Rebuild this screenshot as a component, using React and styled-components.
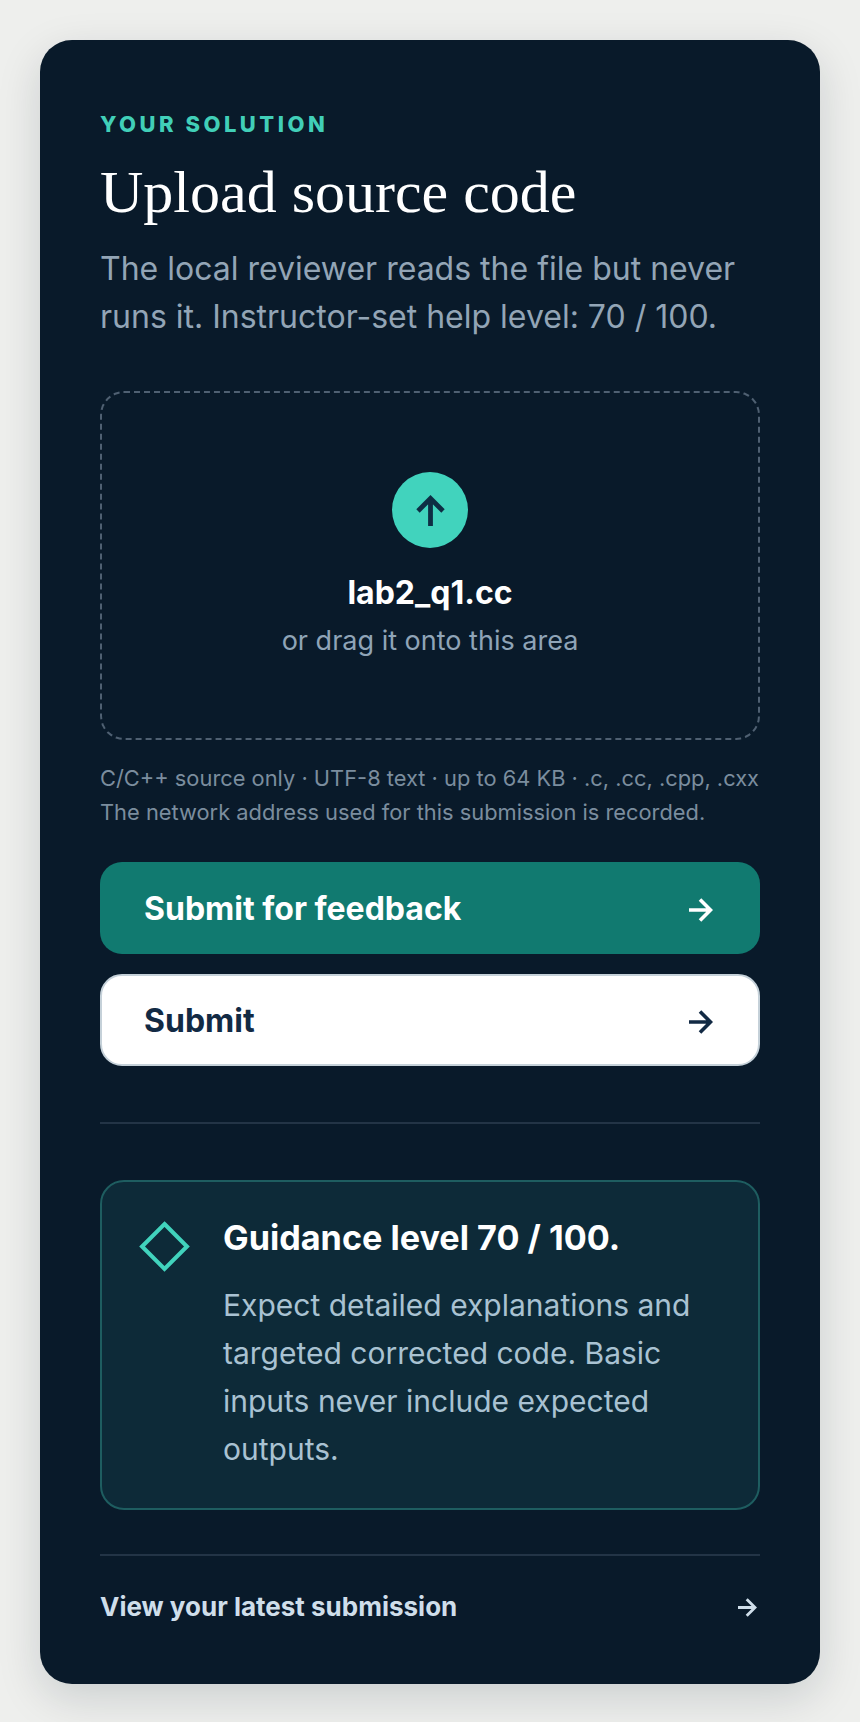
import React from 'react';
import styled, { createGlobalStyle } from 'styled-components';

const GlobalStyle = createGlobalStyle`
  html, body {
    margin: 0;
    padding: 0;
    background: #eeefed;
  }
  * {
    box-sizing: border-box;
  }
`;

const Page = styled.main`
  width: 860px;
  height: 1722px;
  padding: 40px;
  font-family: Inter, "Liberation Sans", sans-serif;
`;

const Card = styled.section`
  height: 1644px;
  padding: 72px 60px 0;
  background: #091a2a;
  border-radius: 32px;
  box-shadow: 0 14px 44px rgba(10, 26, 41, 0.15);
`;

const Eyebrow = styled.div`
  font-size: 22px;
  line-height: 24px;
  font-weight: 800;
  letter-spacing: 3.5px;
  color: #41cfb8;
`;

const Title = styled.h1`
  margin: 23px 0 0;
  font-family: "Liberation Serif", serif;
  font-size: 60px;
  line-height: 66px;
  font-weight: 400;
  color: #ffffff;
`;

const Lead = styled.p`
  margin: 20px 0 0;
  font-size: 32px;
  line-height: 48px;
  color: #93a5b6;
`;

const DropZone = styled.div`
  margin-top: 50px;
  height: 349px;
  border: 2px dashed #4f6072;
  border-radius: 24px;
  display: flex;
  flex-direction: column;
  align-items: center;
  padding-top: 79px;
`;

const UploadCircle = styled.div`
  width: 76px;
  height: 76px;
  border-radius: 50%;
  background: #41d3bd;
  color: #0e2e44;
  display: flex;
  align-items: center;
  justify-content: center;
`;

const FileName = styled.div`
  margin-top: 25px;
  font-size: 32px;
  line-height: 40px;
  font-weight: 700;
  color: #ffffff;
`;

const DropHint = styled.div`
  margin-top: 10px;
  font-size: 27px;
  line-height: 36px;
  color: #8fa4b7;
`;

const Notes = styled.div`
  margin-top: 21px;
  font-size: 21.85px;
  line-height: 34px;
  color: #7b8d9e;
  white-space: nowrap;
`;

const ActionButton = styled.button`
  width: 100%;
  height: 92px;
  margin-top: ${props => props.$gap}px;
  padding: ${props => (props.$primary ? '0 47px 0 44px' : '0 45px 0 42px')};
  display: flex;
  align-items: center;
  justify-content: space-between;
  font: inherit;
  font-size: 32px;
  font-weight: 700;
  border-radius: 22px;
  background: ${props => (props.$primary ? '#117a70' : '#ffffff')};
  color: ${props => (props.$primary ? '#ffffff' : '#122a44')};
  border: ${props => (props.$primary ? 'none' : '2px solid #c5d1d9')};
`;

const Divider = styled.hr`
  margin: ${props => props.$top}px 0 0;
  border: none;
  height: 2px;
  background: #233446;
`;

const GuidanceBox = styled.div`
  margin-top: 56px;
  height: 330px;
  padding: 36px 37px;
  display: flex;
  gap: 34px;
  background: #0d2a38;
  border: 2px solid #1e5d60;
  border-radius: 24px;
`;

const GuidanceBody = styled.div`
  flex: 1;
`;

const GuidanceTitle = styled.div`
  font-size: 34.2px;
  line-height: 40px;
  font-weight: 700;
  color: #ffffff;
`;

const GuidanceText = styled.p`
  margin: 23px 0 0;
  font-size: 30px;
  line-height: 48px;
  color: #a9c2d2;
`;

const Diamond = styled.svg`
  flex: none;
  width: 51px;
  height: 51px;
  margin: 3px -1px 0 0;
`;

const ButtonArrow = styled.span`
  display: flex;
  margin-top: 3px;
`;

const LatestLink = styled.div`
  display: flex;
  align-items: center;
  justify-content: space-between;
  margin-top: 33px;
  padding-right: 3px;
  font-size: 26px;
  line-height: 36px;
  font-weight: 700;
  color: #cfdeea;
`;

const ArrowSvg = styled.svg`
  flex: none;
  width: ${props => props.$size}px;
  height: ${props => props.$size}px;
`;

const RightArrow = ({ size }) => (
  <ArrowSvg $size={size} viewBox="0 0 24 24" fill="none" stroke="currentColor" strokeWidth="3.6">
    <path d="M0 12H21M11 1.5 21.5 12 11 22.5" />
  </ArrowSvg>
);

const UpArrow = () => (
  <ArrowSvg $size={31} viewBox="0 0 31 31" fill="none" stroke="currentColor" strokeWidth="4.8">
    <path d="M15.5 31V4M3 16 15.5 3.5 28 16" />
  </ArrowSvg>
);

const App = () => {
  return (
    <Page>
      <GlobalStyle />
      <Card>
        <Eyebrow>YOUR SOLUTION</Eyebrow>
        <Title>Upload source code</Title>
        <Lead>
          The local reviewer reads the file but never runs it. Instructor-set help level: 70 / 100.
        </Lead>
        <DropZone>
          <UploadCircle>
            <UpArrow />
          </UploadCircle>
          <FileName>lab2_q1.cc</FileName>
          <DropHint>or drag it onto this area</DropHint>
        </DropZone>
        <Notes>
          C/C++ source only · UTF-8 text · up to 64 KB · .c, .cc, .cpp, .cxx
          <br />
          The network address used for this submission is recorded.
        </Notes>
        <ActionButton $primary $gap={33}>
          Submit for feedback
          <ButtonArrow>
            <RightArrow size={24} />
          </ButtonArrow>
        </ActionButton>
        <ActionButton $gap={20}>
          Submit
          <ButtonArrow>
            <RightArrow size={24} />
          </ButtonArrow>
        </ActionButton>
        <Divider $top={56} />
        <GuidanceBox>
          <Diamond viewBox="0 0 50 50" fill="none">
            <path d="M25 3 47 25 25 47 3 25Z" stroke="#41d3bd" strokeWidth="4" />
          </Diamond>
          <GuidanceBody>
            <GuidanceTitle>Guidance level 70 / 100.</GuidanceTitle>
            <GuidanceText>
              Expect detailed explanations and targeted corrected code. Basic inputs never include expected outputs.
            </GuidanceText>
          </GuidanceBody>
        </GuidanceBox>
        <Divider $top={44} />
        <LatestLink>
          View your latest submission
          <RightArrow size={19} />
        </LatestLink>
      </Card>
    </Page>
  );
};

export default App;
